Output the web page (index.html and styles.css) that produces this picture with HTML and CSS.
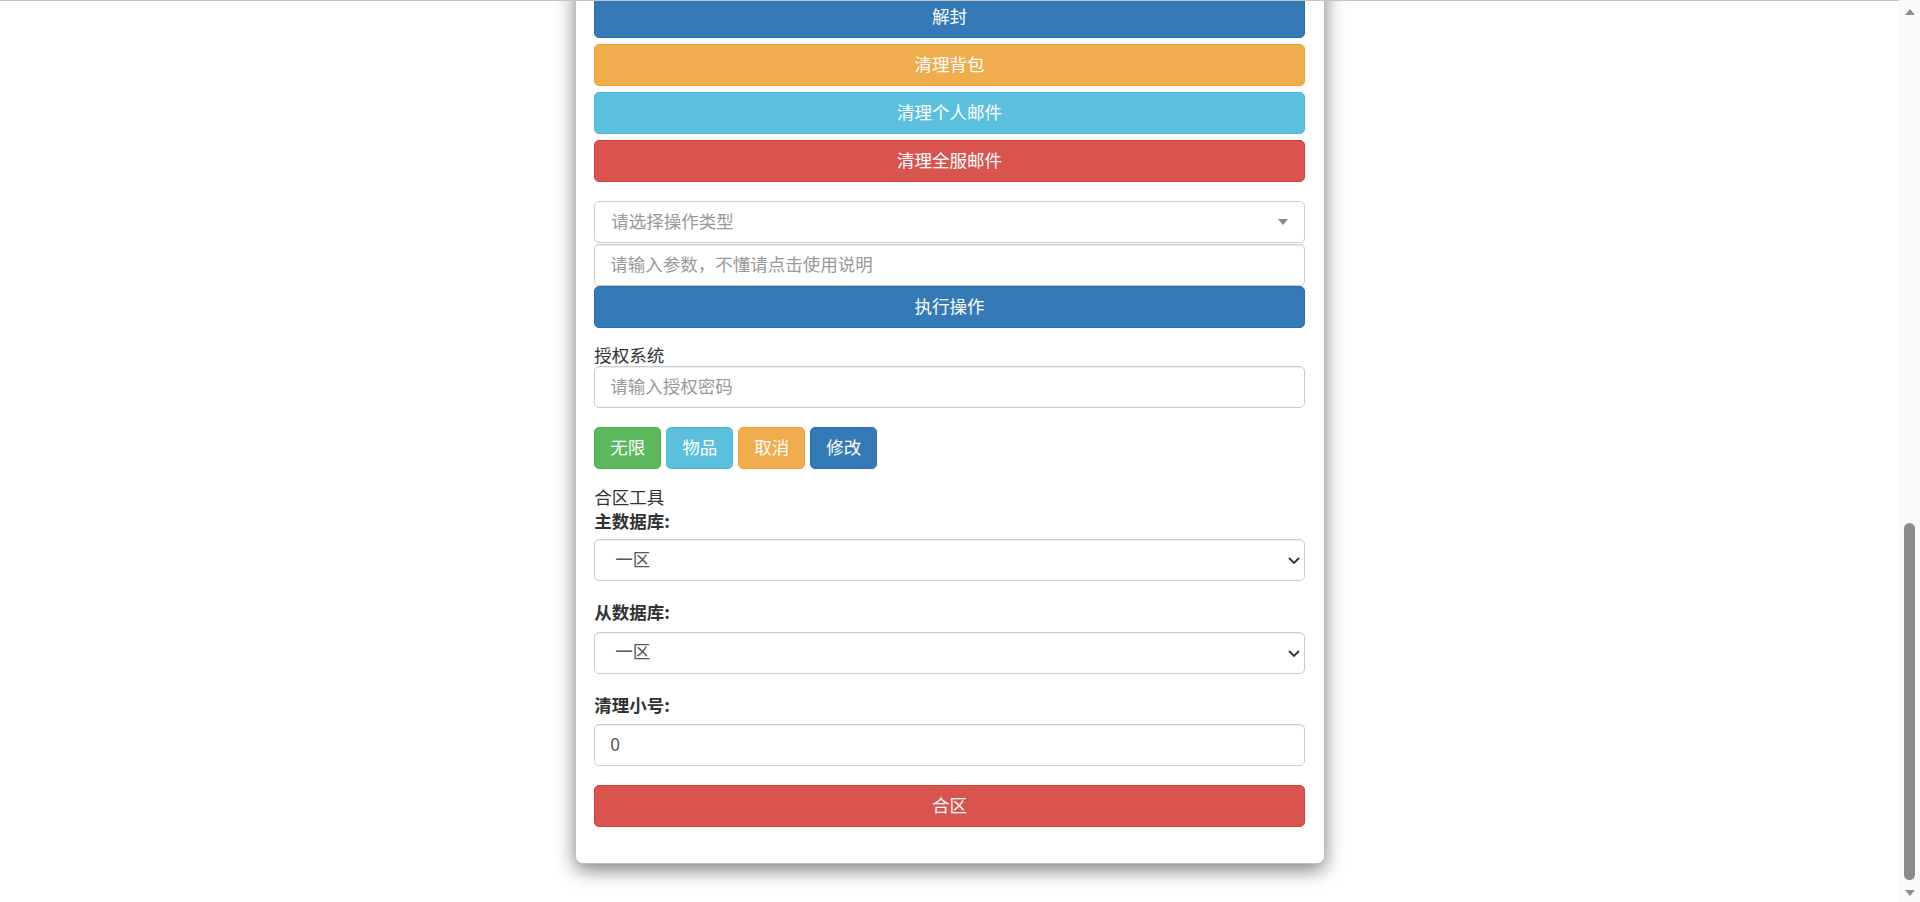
FILE: index.html
```html
<!DOCTYPE html>
<html lang="zh-CN">
<head>
<meta charset="utf-8">
<title>管理工具</title>
<link rel="stylesheet" href="styles.css">
</head>
<body>
<div class="screen">
  <div class="viewport">
    <div class="modal">
      <div class="modal-body">
        <div class="btn-stack">
          <button class="btn btn-primary">解封</button>
          <button class="btn btn-warning">清理背包</button>
          <button class="btn btn-info">清理个人邮件</button>
          <button class="btn btn-danger">清理全服邮件</button>
        </div>

        <div class="op-group">
          <div class="select2">
            <span class="select2-placeholder">请选择操作类型</span>
            <span class="select2-arrow"></span>
          </div>
          <input class="form-control op-input" type="text" placeholder="请输入参数，不懂请点击使用说明">
          <button class="btn btn-primary">执行操作</button>
        </div>

        <div class="auth-group">
          <div class="plain-label auth-label">授权系统</div>
          <input class="form-control" type="text" placeholder="请输入授权密码">
          <div class="btn-row">
            <button class="btn btn-inline btn-success">无限</button>
            <button class="btn btn-inline btn-info">物品</button>
            <button class="btn btn-inline btn-warning">取消</button>
            <button class="btn btn-inline btn-primary">修改</button>
          </div>
        </div>

        <div class="merge-group">
          <div class="plain-label merge-title">合区工具</div>
          <label class="field-label first-label">主数据库:</label>
          <div class="select-wrap">
            <select class="form-control native-select">
              <option>一区</option>
            </select>
            <svg class="chev" width="12" height="7" viewBox="0 0 12 7"><path d="M1 1 L6 6 L11 1" fill="none" stroke="#333" stroke-width="1.8"/></svg>
          </div>
          <label class="field-label">从数据库:</label>
          <div class="select-wrap">
            <select class="form-control native-select">
              <option>一区</option>
            </select>
            <svg class="chev" width="12" height="7" viewBox="0 0 12 7"><path d="M1 1 L6 6 L11 1" fill="none" stroke="#333" stroke-width="1.8"/></svg>
          </div>
          <label class="field-label">清理小号:</label>
          <input class="form-control value-input" type="text" value="0">
          <button class="btn btn-danger merge-btn">合区</button>
        </div>
      </div>
    </div>
  </div>

  <div class="scrollbar">
    <div class="sb-btn"><span class="tri-up"></span></div>
    <div class="sb-track"><div class="sb-thumb"></div></div>
    <div class="sb-btn"><span class="tri-down"></span></div>
  </div>
</div>
</body>
</html>
```

FILE: styles.css
```css
html, body {
  margin: 0;
  padding: 0;
  height: 100%;
  overflow: hidden;
  background: #fff;
}

body {
  font-family: "Noto Sans CJK SC", "Liberation Sans", sans-serif;
  font-size: 17.5px;
  color: #333;
}

.screen {
  display: flex;
  height: 902px;
}

.viewport {
  flex: 1;
  height: 902px;
  box-sizing: border-box;
  border-top: 1px solid #c4c4c4;
  display: flex;
  flex-direction: column;
  justify-content: flex-end;
  overflow: hidden;
}

.modal {
  flex-shrink: 0;
  width: 750px;
  box-sizing: border-box;
  margin: 0 auto 38px;
  background: #fff;
  border: 1px solid rgba(0, 0, 0, 0.25);
  border-radius: 7.5px;
  box-shadow: 0 6px 19px rgba(0, 0, 0, 0.5);
}

.modal-body {
  padding: 18.75px 18.75px 36px;
  display: flex;
  flex-direction: column;
}

/* buttons */
.btn {
  display: block;
  width: 100%;
  height: 42px;
  box-sizing: border-box;
  margin: 0;
  padding: 0 0 3px;
  border: 1px solid transparent;
  border-radius: 5px;
  color: #fff;
  font-family: inherit;
  font-size: 17.5px;
  line-height: 24px;
  text-align: center;
  cursor: pointer;
}

.btn-primary { background: #337ab7; border-color: #2e6da4; }
.btn-warning { background: #f0ad4e; border-color: #eea236; }
.btn-info    { background: #5bc0de; border-color: #46b8da; }
.btn-danger  { background: #d9534f; border-color: #d43f3a; }
.btn-success { background: #5cb85c; border-color: #4cae4c; }

.btn-stack {
  display: flex;
  flex-direction: column;
  gap: 6px;
}

/* operation group */
.op-group {
  margin-top: 19px;
  display: flex;
  flex-direction: column;
}

.select2 {
  height: 42px;
  box-sizing: border-box;
  border: 1px solid #cfcfcf;
  border-radius: 5px;
  background: #fff;
  display: flex;
  align-items: center;
  padding: 0 15px 3px 16px;
}

.select2-placeholder {
  flex: 1;
  color: #999;
  line-height: 24px;
}

.select2-arrow {
  width: 0;
  height: 0;
  border-left: 5px solid transparent;
  border-right: 5px solid transparent;
  border-top: 6px solid #888;
  margin: 3px 1px 0 0;
}

.form-control {
  display: block;
  width: 100%;
  height: 42px;
  box-sizing: border-box;
  margin: 0;
  padding: 0 15px 3px;
  border: 1px solid #ccc;
  border-radius: 5px;
  background: #fff;
  color: #555;
  font-family: inherit;
  font-size: 17.5px;
  line-height: 24px;
  box-shadow: inset 0 1px 1px rgba(0, 0, 0, 0.075);
  outline: none;
}

.form-control::placeholder {
  color: #999;
  opacity: 1;
}

.op-input {
  margin-top: 1px;
}

/* auth group */
.plain-label {
  color: #333;
}

.auth-label {
  margin-top: 16px;
  line-height: 22px;
}

.btn-row {
  margin-top: 19px;
  display: flex;
  gap: 5px;
}

.btn-inline {
  width: auto;
  padding: 0 15px 3px;
}

/* merge group */
.merge-group {
  margin-top: 15.5px;
  display: flex;
  flex-direction: column;
}

.merge-title {
  line-height: 24px;
}

.field-label {
  display: block;
  font-weight: 700;
  line-height: 24px;
  margin: 19px 0 7.5px;
  color: #333;
}

.first-label {
  margin-top: 0;
  margin-bottom: 6.5px;
}

.select-wrap {
  position: relative;
}

.native-select {
  appearance: none;
  -webkit-appearance: none;
  padding-left: 20px;
  color: #555;
}

.chev {
  position: absolute;
  right: 5px;
  top: 18px;
  pointer-events: none;
}

.value-input {
  color: #555;
}

.merge-btn {
  margin-top: 19px;
}

/* scrollbar column */
.scrollbar {
  width: 21px;
  height: 902px;
  flex-shrink: 0;
  background: #fafafa;
  display: flex;
  flex-direction: column;
}

.sb-btn {
  height: 21px;
  display: flex;
  align-items: center;
  justify-content: center;
}

.tri-up {
  width: 0;
  height: 0;
  border-left: 5.5px solid transparent;
  border-right: 5.5px solid transparent;
  border-bottom: 6px solid #8e8e8e;
  margin-top: 3px;
}

.tri-down {
  width: 0;
  height: 0;
  border-left: 5.5px solid transparent;
  border-right: 5.5px solid transparent;
  border-top: 6px solid #8e8e8e;
  margin-top: 2px;
}

.sb-track {
  flex: 1;
  display: flex;
  flex-direction: column;
  justify-content: flex-end;
  align-items: center;
  padding-bottom: 1px;
}

.sb-thumb {
  width: 11px;
  height: 357px;
  border-radius: 5.5px;
  background: #8b8b8b;
}
```
